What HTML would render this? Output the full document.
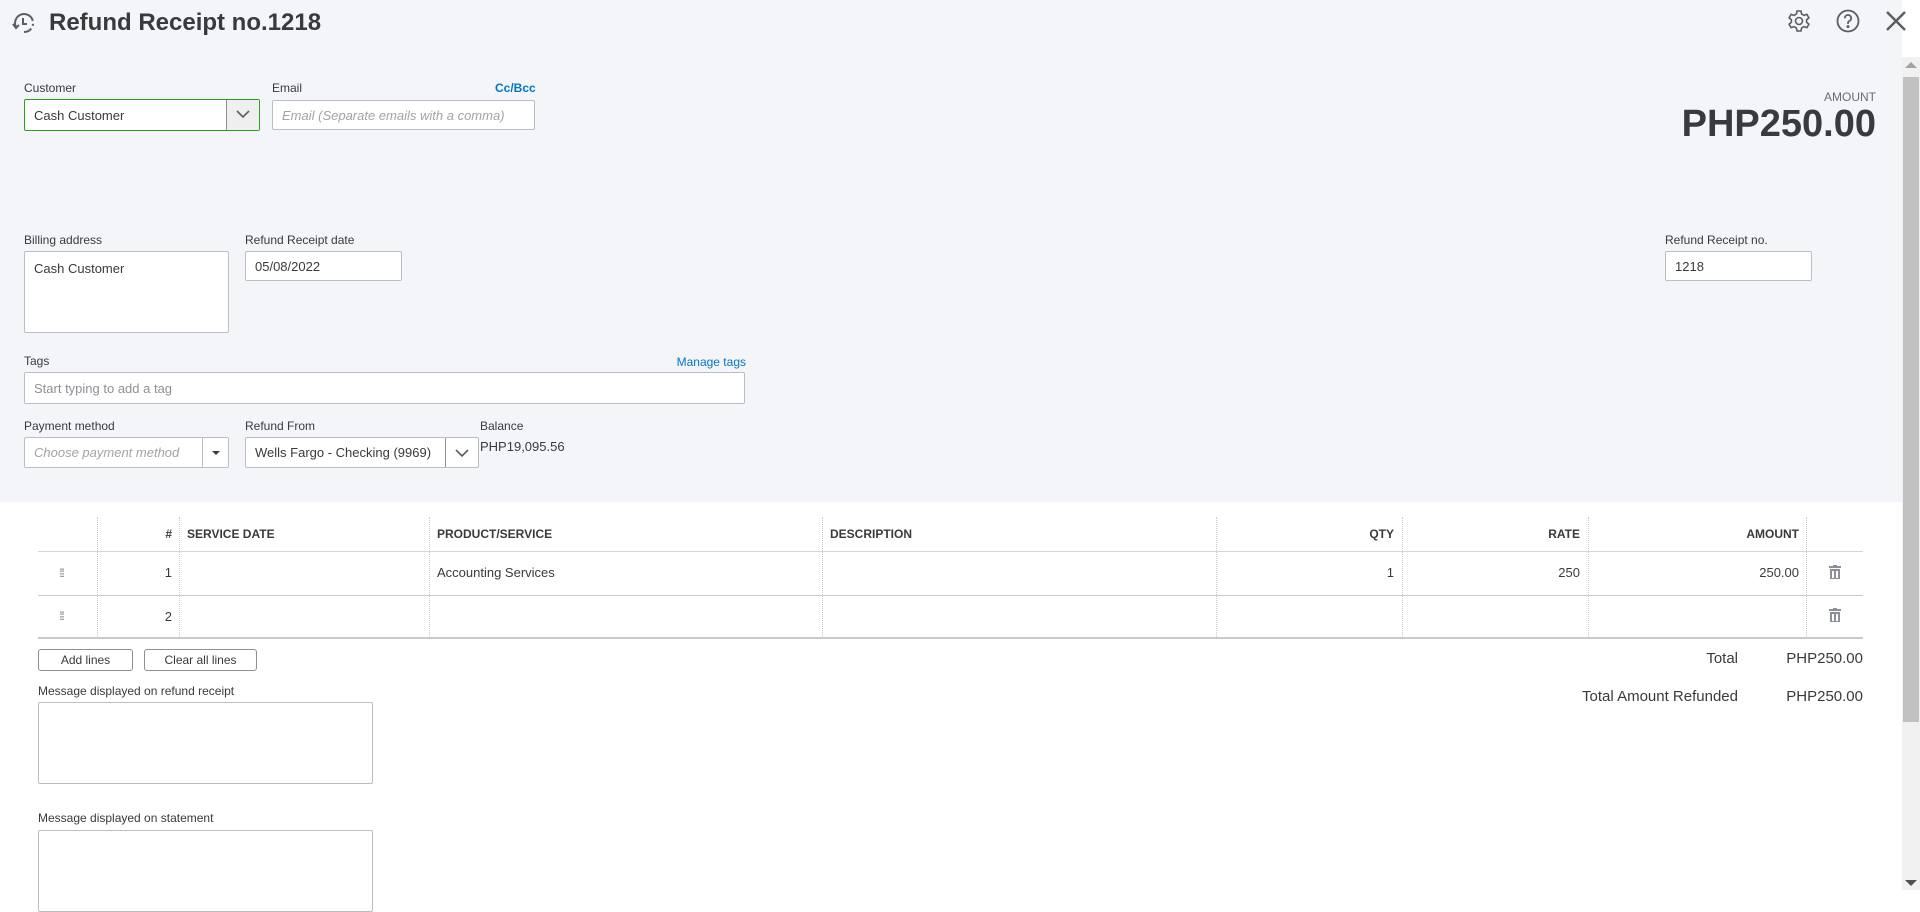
<!DOCTYPE html>
<html><head><meta charset="utf-8"><style>
*{box-sizing:border-box;margin:0;padding:0}
body{width:1920px;height:890px;overflow:hidden;background:#fff;font-family:"Liberation Sans",Arial,sans-serif;color:#393a3d;position:relative}
.a{position:absolute}
.top{left:0;top:0;width:1902px;height:502px;background:#f4f5f8}
.lbl{font-size:12px;color:#393a3d}
.inp{background:#fff;border:1px solid #babec5;border-radius:2px;font-size:13px;padding:0 9px;display:flex;align-items:center;color:#393a3d}
.ph{color:#a0a3a8;font-style:italic}
.link{font-size:12px;color:#0077c5;font-weight:bold}
.th{font-size:12px;font-weight:bold;color:#393a3d;top:527px}
.cell{font-size:13px;color:#393a3d}
.vl{width:0;border-left:1px dotted #c8cace}
.btn{border:1px solid #8d9096;border-radius:3px;background:#fff;font-size:12px;display:flex;align-items:center;justify-content:center;color:#393a3d}
</style></head><body>
<div class="a top"></div>
<svg class="a" style="left:10px;top:9px" width="28" height="28" viewBox="0 0 28 28" fill="none" stroke="#5b5d61" stroke-width="2"><path d="M6 18A9 9 0 1 1 14 23" stroke-dasharray="30 3 2 3"/><path d="M13 9v6h4"/><path d="M3 15l3 4 3-3"/></svg>
<div class="a" style="left:49px;top:9px;font-size:24px;font-weight:bold;color:#393a3d">Refund Receipt no.1218</div>
<svg class="a" style="left:1787px;top:9px" width="24" height="24" viewBox="0 0 24 24" fill="none" stroke="#5b5d61" stroke-width="1.6"><circle cx="12" cy="12" r="3.5"/><path d="M10 2h4l.6 3 2.4 1.4 2.9-1 2 3.4-2.3 2v2.4l2.3 2-2 3.4-2.9-1L14.6 19 14 22h-4l-.6-3L7 17.6l-2.9 1-2-3.4 2.3-2v-2.4l-2.3-2 2-3.4 2.9 1L9.4 5z"/></svg>
<svg class="a" style="left:1836px;top:9px" width="24" height="24" viewBox="0 0 24 24" fill="none" stroke="#5b5d61" stroke-width="1.8"><circle cx="12" cy="12" r="10.5"/><path d="M8.8 9.2a3.2 3.2 0 1 1 4.5 2.9c-.9.4-1.3 1-1.3 2v.8"/><circle cx="12" cy="17.6" r=".6" fill="#5b5d61"/></svg>
<svg class="a" style="left:1885px;top:10px" width="22" height="22" viewBox="0 0 22 22" stroke="#5b5d61" stroke-width="2.4"><path d="M2 2l18 18M20 2L2 20"/></svg>
<div class="a" style="left:1902px;top:57px;width:18px;height:833px;background:#f1f1f1"></div>
<div class="a" style="left:1905px;top:62px;width:0;height:0;border:6px solid transparent;border-bottom-color:#a3a3a3;border-top:0"></div>
<div class="a" style="left:1903px;top:77px;width:16px;height:645px;background:#c1c1c1"></div>
<div class="a" style="left:1905px;top:880px;width:0;height:0;border:6px solid transparent;border-top-color:#505050;border-bottom:0"></div>

<div class="a lbl" style="left:24px;top:81px">Customer</div>
<div class="a inp" style="left:24px;top:99px;width:236px;height:32px;border:1px solid #2ca01c">Cash Customer</div>
<div class="a" style="left:226px;top:100px;width:33px;height:30px;background:#efefef;border-left:1px solid #8d9096"></div>
<svg class="a" style="left:235px;top:109px" width="16" height="10" viewBox="0 0 16 10" fill="none" stroke="#5b5d61" stroke-width="1.6"><path d="M2 2l6 6 6-6"/></svg>
<div class="a lbl" style="left:272px;top:81px">Email</div>
<div class="a link" style="left:495px;top:81px">Cc/Bcc</div>
<div class="a inp" style="left:272px;top:100px;width:263px;height:30px"><span class="ph">Email (Separate emails with a comma)</span></div>
<div class="a" style="left:1700px;top:90px;width:176px;text-align:right;font-size:12px;color:#6b6c72">AMOUNT</div>
<div class="a" style="left:1560px;top:103px;width:316px;text-align:right;font-size:38px;font-weight:bold;color:#393a3d">PHP250.00</div>

<div class="a lbl" style="left:24px;top:233px">Billing address</div>
<div class="a inp" style="left:24px;top:251px;width:205px;height:82px;align-items:flex-start;padding-top:9px">Cash Customer</div>
<div class="a lbl" style="left:245px;top:233px">Refund Receipt date</div>
<div class="a inp" style="left:245px;top:251px;width:157px;height:30px">05/08/2022</div>
<div class="a lbl" style="left:1665px;top:233px">Refund Receipt no.</div>
<div class="a inp" style="left:1665px;top:251px;width:147px;height:30px">1218</div>

<div class="a lbl" style="left:24px;top:354px">Tags</div>
<div class="a link" style="left:646px;top:355px;width:100px;text-align:right;font-weight:normal">Manage tags</div>
<div class="a inp" style="left:24px;top:372px;width:721px;height:32px"><span style="color:#8d9096">Start typing to add a tag</span></div>

<div class="a lbl" style="left:24px;top:419px">Payment method</div>
<div class="a inp" style="left:24px;top:437px;width:205px;height:31px"><span class="ph">Choose payment method</span></div>
<div class="a" style="left:202px;top:438px;height:29px;border-left:1px solid #babec5"></div>
<div class="a" style="left:212px;top:451px;border:4px solid transparent;border-top:4px solid #393a3d;border-bottom:0"></div>
<div class="a lbl" style="left:245px;top:419px">Refund From</div>
<div class="a inp" style="left:245px;top:437px;width:234px;height:31px">Wells Fargo - Checking (9969)</div>
<div class="a" style="left:445px;top:438px;height:29px;border-left:1px solid #8d9096"></div>
<svg class="a" style="left:454px;top:448px" width="16" height="10" viewBox="0 0 16 10" fill="none" stroke="#5b5d61" stroke-width="1.6"><path d="M2 2l6 6 6-6"/></svg>
<div class="a lbl" style="left:480px;top:419px">Balance</div>
<div class="a" style="left:480px;top:439px;font-size:13px;color:#393a3d">PHP19,095.56</div>

<div class="a" style="left:38px;top:551px;width:1825px;border-top:1px solid #d4d7dc"></div>
<div class="a" style="left:38px;top:595px;width:1825px;border-top:1px solid #c8cace"></div>
<div class="a" style="left:38px;top:637px;width:1825px;border-top:2px solid #c8cace"></div>
<div class="a vl" style="left:97px;top:517px;height:120px"></div>
<div class="a vl" style="left:179px;top:517px;height:120px"></div>
<div class="a vl" style="left:429px;top:517px;height:120px"></div>
<div class="a vl" style="left:822px;top:517px;height:120px"></div>
<div class="a vl" style="left:1216px;top:517px;height:120px"></div>
<div class="a vl" style="left:1402px;top:517px;height:120px"></div>
<div class="a vl" style="left:1588px;top:517px;height:120px"></div>
<div class="a vl" style="left:1806px;top:517px;height:120px"></div>
<div class="a th" style="left:100px;width:72px;text-align:right">#</div>
<div class="a th" style="left:187px">SERVICE DATE</div>
<div class="a th" style="left:437px">PRODUCT/SERVICE</div>
<div class="a th" style="left:830px">DESCRIPTION</div>
<div class="a th" style="left:1216px;width:178px;text-align:right">QTY</div>
<div class="a th" style="left:1402px;width:178px;text-align:right">RATE</div>
<div class="a th" style="left:1588px;width:211px;text-align:right">AMOUNT</div>
<div class="a" style="left:59px;top:566px;font-size:12px;color:#8d9096;letter-spacing:-2px">⁞⁞⁞</div>
<div class="a" style="left:59px;top:609px;font-size:12px;color:#8d9096;letter-spacing:-2px">⁞⁞⁞</div>
<div class="a cell" style="left:100px;top:565px;width:72px;text-align:right">1</div>
<div class="a cell" style="left:100px;top:609px;width:72px;text-align:right">2</div>
<div class="a cell" style="left:437px;top:565px">Accounting Services</div>
<div class="a cell" style="left:1216px;top:565px;width:178px;text-align:right">1</div>
<div class="a cell" style="left:1402px;top:565px;width:178px;text-align:right">250</div>
<div class="a cell" style="left:1588px;top:565px;width:211px;text-align:right">250.00</div>
<svg class="a" style="left:1829px;top:565px" width="12" height="14" viewBox="0 0 12 14" fill="#8d9096"><rect x="0" y="1" width="12" height="2"/><rect x="4" y="0" width="4" height="2"/><path d="M1 4h10v10H1zM3 6v7h2V6zm4 0v7h2V6z" fill-rule="evenodd"/></svg>
<svg class="a" style="left:1829px;top:608px" width="12" height="14" viewBox="0 0 12 14" fill="#8d9096"><rect x="0" y="1" width="12" height="2"/><rect x="4" y="0" width="4" height="2"/><path d="M1 4h10v10H1zM3 6v7h2V6zm4 0v7h2V6z" fill-rule="evenodd"/></svg>

<div class="a btn" style="left:38px;top:649px;width:95px;height:22px">Add lines</div>
<div class="a btn" style="left:144px;top:649px;width:113px;height:22px">Clear all lines</div>
<div class="a" style="left:1600px;top:650px;width:138px;text-align:right;font-size:15px">Total</div>
<div class="a" style="left:1750px;top:650px;width:113px;text-align:right;font-size:15px">PHP250.00</div>
<div class="a" style="left:1480px;top:688px;width:258px;text-align:right;font-size:15px">Total Amount Refunded</div>
<div class="a" style="left:1750px;top:688px;width:113px;text-align:right;font-size:15px">PHP250.00</div>

<div class="a lbl" style="left:38px;top:684px">Message displayed on refund receipt</div>
<div class="a inp" style="left:38px;top:702px;width:335px;height:82px"></div>
<div class="a lbl" style="left:38px;top:811px">Message displayed on statement</div>
<div class="a inp" style="left:38px;top:830px;width:335px;height:82px"></div>
</body></html>
